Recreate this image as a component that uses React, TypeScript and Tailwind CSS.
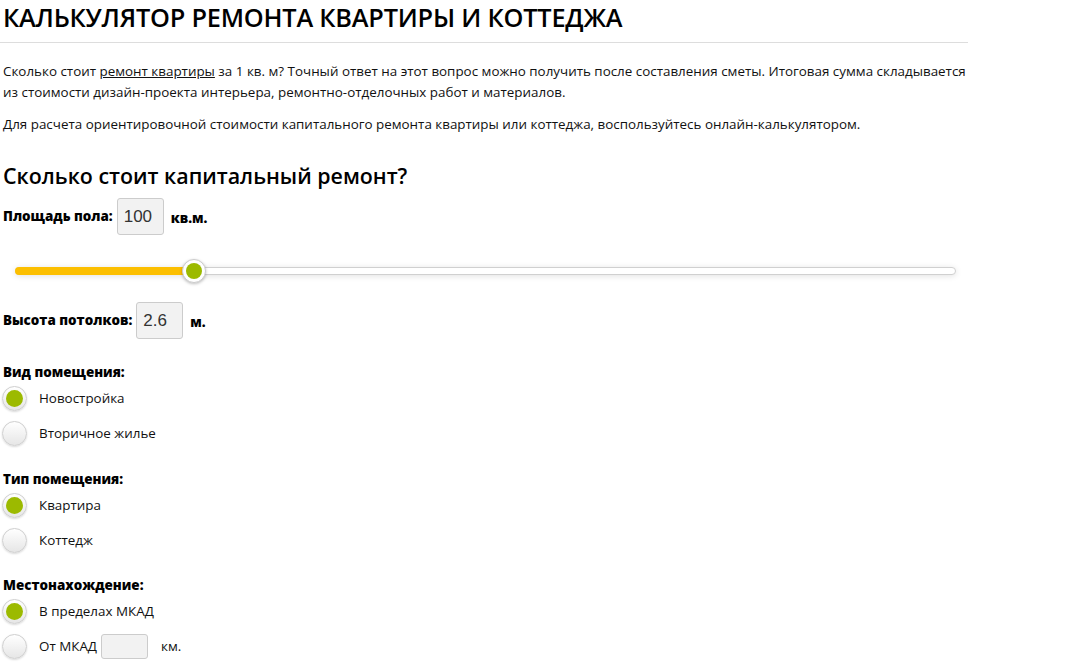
import React from "react";

function Radio({ checked }: { checked?: boolean }) {
  return (
    <span className="relative inline-flex h-[25px] w-[25px] shrink-0 items-center justify-center rounded-full border border-[#cfcfcf] bg-gradient-to-b from-[#ffffff] to-[#e6e6e6] shadow-[0_1px_2px_rgba(0,0,0,0.15)]">
      {checked && <span className="h-[17px] w-[17px] rounded-full bg-[#9cba00]" />}
    </span>
  );
}

function RadioRow({ checked, children }: { checked?: boolean; children: React.ReactNode }) {
  return (
    <div className="flex h-[35px] items-center">
      <div className="ml-[2px] flex w-[37px]">
        <Radio checked={checked} />
      </div>
      <div className="flex items-center text-[13.4px] text-[#111]">{children}</div>
    </div>
  );
}

function Label({ children }: { children: React.ReactNode }) {
  return <span className="text-[13.4px] font-extrabold text-black">{children}</span>;
}

function Box({ value, className }: { value?: string; className?: string }) {
  return (
    <div
      className={
        "flex items-center rounded-[3px] border border-[#cccccc] bg-[#f2f2f2] px-[6px] text-[17px] text-[#333] " +
        (className ?? "")
      }
      style={{ fontFamily: '"Liberation Sans", Arial, sans-serif' }}
    >
      {value}
    </div>
  );
}

export default function App() {
  return (
    <div className="min-h-screen bg-white" style={{ fontFamily: '"Open Sans", sans-serif' }}>
      <div className="w-[968px] pl-[3px]">
        <h1 className="pt-[1px] text-[25.3px] font-semibold leading-[32px] tracking-[-0.2px] text-black">
          КАЛЬКУЛЯТОР РЕМОНТА КВАРТИРЫ И КОТТЕДЖА
        </h1>
        <div className="-ml-[3px] mt-[9px] h-px bg-[#dddddd]" />
        <p className="mt-[18px] text-[13.4px] leading-[21px] text-[#111]">
          Сколько стоит <span className="underline">ремонт квартиры</span> за 1 кв. м? Точный ответ на этот вопрос можно
          получить после составления сметы. Итоговая сумма складывается из стоимости дизайн-проекта интерьера,
          ремонтно-отделочных работ и материалов.
        </p>
        <p className="mt-[11px] text-[13.4px] leading-[21px] text-[#111]">
          Для расчета ориентировочной стоимости капитального ремонта квартиры или коттеджа, воспользуйтесь
          онлайн-калькулятором.
        </p>
        <h2 className="mt-[27px] text-[21.4px] font-semibold leading-[28px] text-black">
          Сколько стоит капитальный ремонт?
        </h2>
        <div className="mt-[8px] flex items-center">
          <Label>Площадь пола:</Label>
          <Box value="100" className="ml-[4px] h-[37px] w-[47px]" />
          <span className="ml-[7px]">
            <Label>кв.м.</Label>
          </span>
        </div>
        <div className="relative mt-[30px] ml-[12px] h-[10px] w-[941px]">
          <div className="absolute left-0 right-0 top-[2px] h-[8px] rounded-full border border-[#d0d0d0] bg-white shadow-[0_1px_6px_rgba(0,0,0,0.12)]" />
          <div className="absolute left-0 top-[2px] h-[8px] w-[182px] rounded-full bg-[#fcbf00]" />
          <div className="absolute left-[167px] top-[-6px] flex h-[24px] w-[24px] items-center justify-center rounded-full border border-[#cccccc] bg-white shadow-[0_1px_3px_rgba(0,0,0,0.25)]">
            <div className="h-[16px] w-[16px] rounded-full bg-[#9cba00]" />
          </div>
        </div>
        <div className="mt-[27px] flex items-center">
          <Label>Высота потолков:</Label>
          <Box value="2.6" className="ml-[4px] h-[37px] w-[47px]" />
          <span className="ml-[7px]">
            <Label>м.</Label>
          </span>
        </div>
        <div className="-ml-[3px]">
          <div className="mt-[23px] pl-[3px] leading-[18px]">
            <Label>Вид помещения:</Label>
          </div>
          <RadioRow checked>Новостройка</RadioRow>
          <RadioRow>Вторичное жилье</RadioRow>
          <div className="mt-[18px] pl-[3px] leading-[18px]">
            <Label>Тип помещения:</Label>
          </div>
          <RadioRow checked>Квартира</RadioRow>
          <RadioRow>Коттедж</RadioRow>
          <div className="mt-[17px] pl-[3px] leading-[18px]">
            <Label>Местонахождение:</Label>
          </div>
          <RadioRow checked>В пределах МКАД</RadioRow>
          <RadioRow>
            От МКАД
            <Box className="ml-[4px] h-[25px] w-[47px]" />
            <span className="ml-[13px]">км.</span>
          </RadioRow>
        </div>
      </div>
    </div>
  );
}
